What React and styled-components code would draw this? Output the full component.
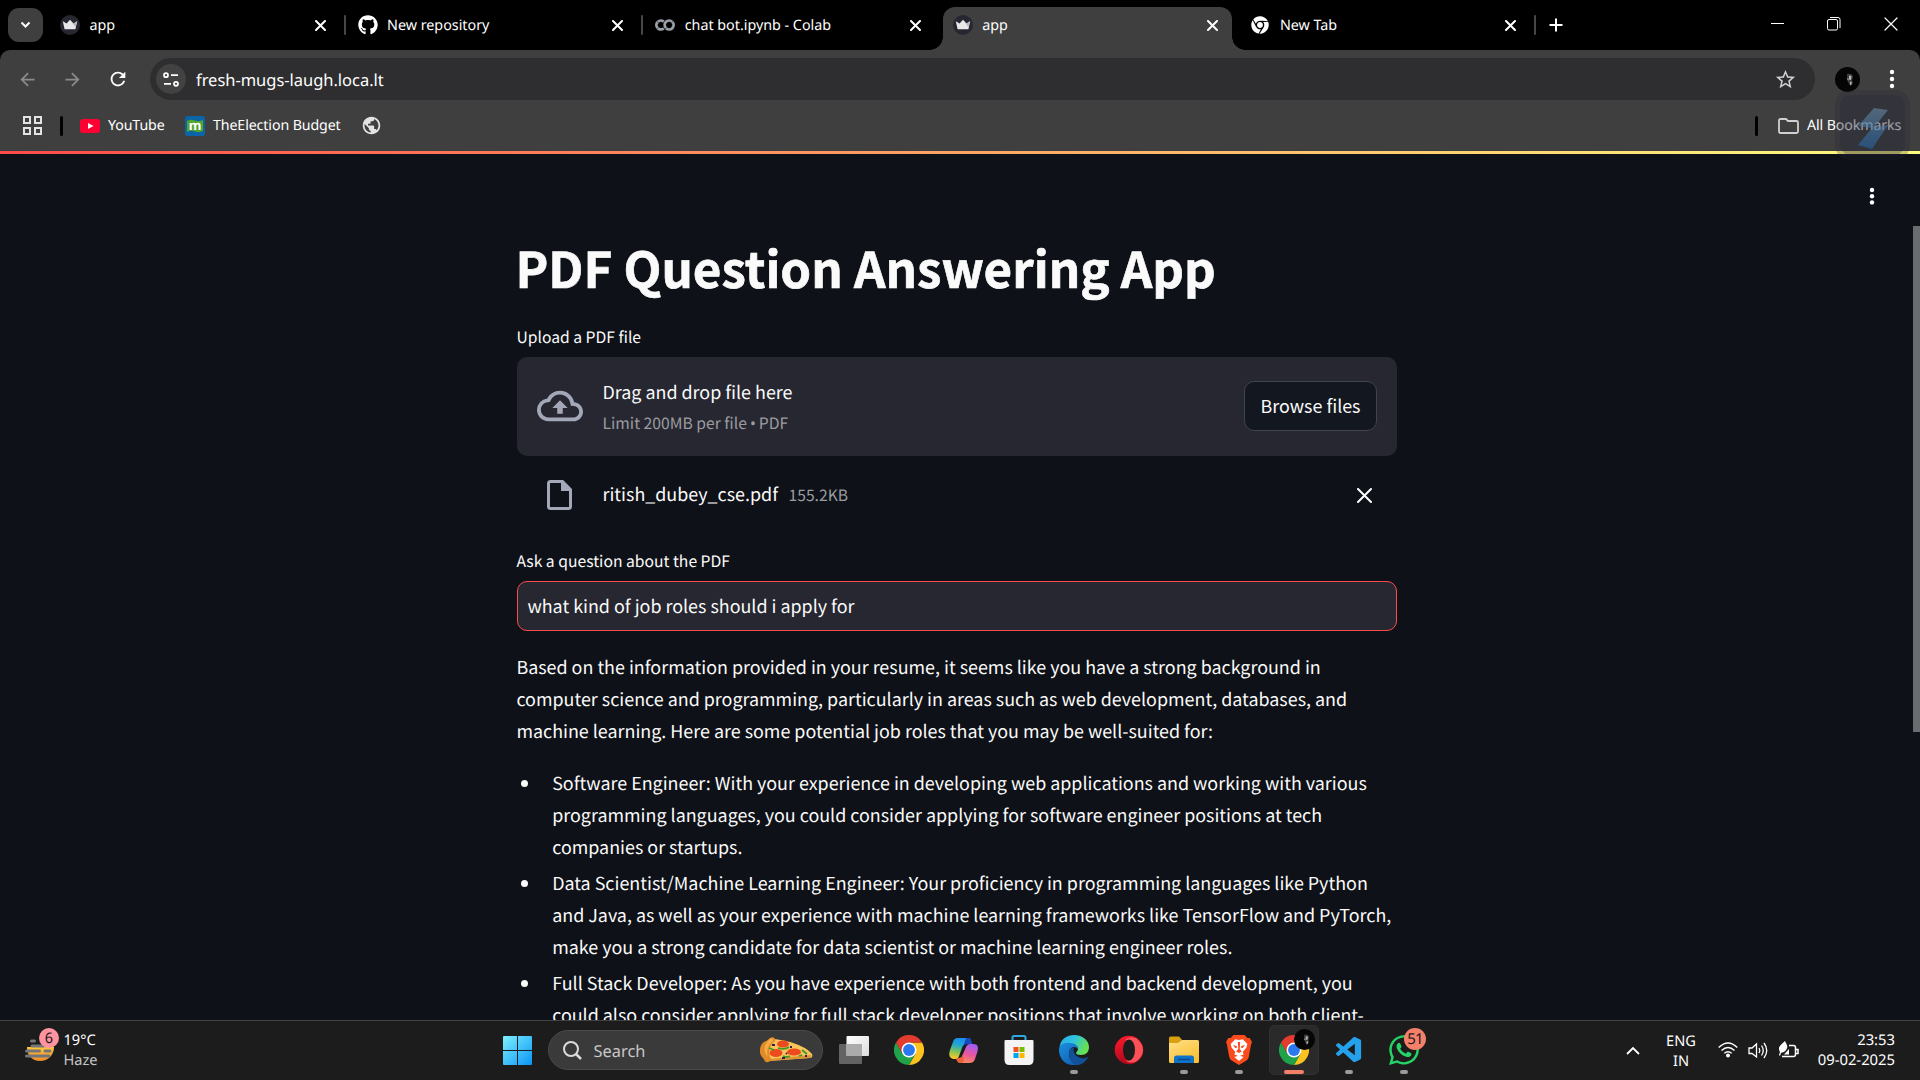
import React from 'react';
import styled, { createGlobalStyle, css } from 'styled-components';
import { FaChrome, FaGithub, FaWhatsapp } from 'react-icons/fa';
import { SiGooglecolab } from 'react-icons/si';
import { MdArrowBack, MdArrowForward, MdRefresh, MdStarBorder, MdPublic } from 'react-icons/md';
import { VscVscode } from 'react-icons/vsc';

const uiFont = '"Noto Sans", "Open Sans", sans-serif';
const appFont = '"Noto Sans CJK SC", "Noto Sans CJK JP", "Open Sans", sans-serif';

const GlobalStyle = createGlobalStyle`
  * { box-sizing: border-box; }
  html, body { margin: 0; padding: 0; background: #0e1117; overflow: hidden; }
  svg { display: block; flex: none; }
`;

const Screen = styled.div`
  width: 1920px;
  height: 1080px;
  display: flex;
  flex-direction: column;
  overflow: hidden;
  position: relative;
  background: #000;
  color: #fff;
  font-family: ${uiFont};
  text-rendering: geometricPrecision;
`;

/* ---------- tab strip ---------- */
const TabStrip = styled.div`
  height: 50px;
  flex: none;
  display: flex;
  align-items: stretch;
  padding-left: 8px;
`;
const TabSearch = styled.div`
  width: 35px;
  height: 34px;
  margin: 8px 4px 0 0;
  border-radius: 11px;
  background: #3f3f3f;
  display: flex;
  align-items: center;
  justify-content: center;
`;
const Tab = styled.div`
  width: 297.6px;
  display: flex;
  align-items: center;
  padding: 0 19px 0 13px;
  position: relative;
  ${(p) => p.$divider && css`
    &::after {
      content: '';
      position: absolute;
      right: -1px;
      top: 15px;
      width: 2px;
      height: 20px;
      background: #474747;
      border-radius: 1px;
    }
  `}
  ${(p) => p.$active && css`
    width: 289px;
    height: 43px;
    margin: 7px 5px 0 3.6px;
    padding: 0 14px 7px 9.4px;
    background: #3f3f3f;
    border-radius: 12px 12px 0 0;
    &::before, &::after {
      content: '';
      position: absolute;
      bottom: 0;
      width: 13px;
      height: 13px;
    }
    &::before { left: -13px; background: radial-gradient(circle at 0 0, transparent 12.5px, #3f3f3f 13px); }
    &::after { right: -13px; background: radial-gradient(circle at 100% 0, transparent 12.5px, #3f3f3f 13px); }
  `}
`;
const Favicon = styled.span`
  width: 20px;
  height: 20px;
  display: flex;
  align-items: center;
  justify-content: center;
`;
const TabTitle = styled.span`
  flex: 1;
  margin-left: 9.500px;
  padding-top: 1.500px;
  font-size: 14.3px;
  line-height: 20px;
  white-space: nowrap;
`;
const NewTab = styled.div`
  width: 22px;
  margin-left: 10px;
  display: flex;
  align-items: center;
  justify-content: center;
`;
const WindowButtons = styled.div`
  margin-left: auto;
  margin-right: 1px;
  display: flex;
  height: 48px;
`;
const WindowButton = styled.div`
  width: 56.5px;
  display: flex;
  align-items: center;
  justify-content: center;
`;

/* ---------- toolbar ---------- */
const Chrome = styled.div`
  height: 101px;
  flex: none;
  background: #3f3f3f;
  border-radius: 10px 10px 0 0;
`;
const Toolbar = styled.div`
  height: 58px;
  display: flex;
  align-items: center;
  padding: 0 12px 0 5px;
`;
const NavButton = styled.div`
  width: 45px;
  display: flex;
  justify-content: center;
  color: ${(p) => (p.$dim ? '#8b8b8b' : '#fff')};
`;
const AddressBar = styled.div`
  width: 1665px;
  height: 42px;
  margin-left: 10px;
  border-radius: 21px;
  background: #2e2e30;
  display: flex;
  align-items: center;
  padding: 0 18px 0 6px;
`;
const SiteInfo = styled.div`
  width: 30px;
  height: 30px;
  border-radius: 50%;
  background: #424242;
  display: flex;
  align-items: center;
  justify-content: center;
`;
const Url = styled.span`
  flex: 1;
  margin-left: 10px;
  padding-top: 1px;
  font-size: 16.5px;
  line-height: 24px;
  letter-spacing: -0.03px;
`;
const Avatar = styled.div`
  width: 25px;
  height: 25px;
  margin-left: 20px;
  border-radius: 50%;
  background: #050505;
`;
const MenuSlot = styled.div`
  width: 24px;
  margin-left: 20px;
  display: flex;
  justify-content: center;
`;
const Bookmarks = styled.div`
  height: 35px;
  display: flex;
  align-items: center;
  padding: 0 16px 0 23px;
`;
const BarDivider = styled.span`
  width: 3px;
  height: 20px;
  border-radius: 2px;
  background: #000;
  margin: 0 ${(p) => p.$after}px 0 ${(p) => p.$before};
`;
const Bookmark = styled.div`
  display: flex;
  align-items: center;
  gap: 8px;
  width: ${(p) => p.$width}px;
`;
const BookmarkText = styled.span`
  padding-top: 1px;
  font-size: 14.2px;
  line-height: 20px;
  letter-spacing: -0.1px;
  white-space: nowrap;
`;

/* ---------- page ---------- */
const GradientLine = styled.div`
  height: 3px;
  flex: none;
  background: linear-gradient(90deg, #ff4b4b, #fffd80);
`;
const Page = styled.div`
  height: 866px;
  flex: none;
  overflow: hidden;
  background: #0e1117;
  display: grid;
  grid-template-columns: 517px 880px 1fr;
  color: #fafafa;
  font-family: ${appFont};
`;
const Main = styled.main`
  grid-column: 2;
  padding-top: 81px;
  min-width: 0;
`;
const Rail = styled.div`
  grid-column: 3;
  display: flex;
  flex-direction: column;
  align-items: flex-end;
`;
const AppMenu = styled.div`
  margin: 33px 45px 21px 0;
`;
const ScrollThumb = styled.div`
  width: 7px;
  height: 506px;
  background: #6b6c6f;
`;
const Title = styled.h1`
  margin: 0 0 23px -1.5px;
  height: 66px;
  font-size: 49.25px;
  line-height: 66px;
  font-weight: 700;
  -webkit-text-stroke: 0.7px #fafafa;
  white-space: nowrap;
`;
const Label = styled.div`
  height: 25px;
  margin: 0 0 8px -0.6px;
  font-size: 15.7px;
  line-height: 25px;
`;
const Dropzone = styled.div`
  height: 99px;
  border-radius: 10px;
  background: #262730;
  display: flex;
  align-items: center;
  padding: 0 20px 1.5px;
`;
const DropText = styled.div`
  flex: 1;
  margin-left: 19.5px;
  padding-top: 1.5px;
`;
const DropTitle = styled.div`
  font-size: 17.9px;
  line-height: 32px;
`;
const Small = styled.div`
  font-size: 15.7px;
  line-height: 30px;
  color: #9b9ca0;
`;
const MidDot = styled.span`
  font-family: "Noto Sans", sans-serif;
  margin: 0 -0.5px;
`;
const BrowseButton = styled.button`
  width: 133px;
  height: 50px;
  padding: 0 0 1px;
  border: 1px solid #41444c;
  border-radius: 10px;
  background: #131720;
  color: #fafafa;
  font-family: inherit;
  font-size: 17.9px;
  line-height: 32px;
`;
const FileRow = styled.div`
  height: 40px;
  margin: 19px 0 33px;
  display: flex;
  align-items: center;
  padding: 0 25px 0 30px;
`;
const FileName = styled.span`
  margin: 0 10.5px 2px 29.5px;
  font-size: 17.9px;
  line-height: 32px;
`;
const FileClose = styled.span`
  margin-left: auto;
`;
const Field = styled.div`
  height: 50px;
  border: 1px solid #ff4b4b;
  border-radius: 10px;
  background: #262730;
  padding: 8px 9.4px;
  font-size: 17.9px;
  line-height: 32px;
`;
const Answer = styled.p`
  margin: 20px 0 20px -0.6px;
  font-size: 17.9px;
  line-height: 32px;
  white-space: nowrap;
`;
const List = styled.ul`
  list-style: none;
  margin: 0;
  padding: 0;
  display: flex;
  flex-direction: column;
  gap: 4px;
`;
const Item = styled.li`
  display: flex;
  font-size: 17.9px;
  line-height: 32px;
  white-space: nowrap;
`;
const Bullet = styled.span`
  width: 7.5px;
  height: 7.5px;
  flex: none;
  border-radius: 50%;
  background: #fafafa;
  margin: 12.5px 24.2px 0 3.5px;
`;

/* ---------- floating shortcut over the window corner ---------- */
const Floating = styled.div`
  position: absolute;
  left: 1835px;
  top: 90px;
  width: 75px;
  height: 70px;
  border-radius: 15px;
  background: rgba(38, 40, 56, 0.25);
  padding: 5px;
  overflow: hidden;
`;
const FloatingInner = styled.div`
  height: 60px;
  border-radius: 11px;
  background: rgba(34, 37, 54, 0.25);
  display: flex;
  align-items: center;
  justify-content: center;
  padding-top: 5px;
`;

/* ---------- taskbar ---------- */
const Taskbar = styled.div`
  height: 60px;
  flex: none;
  display: flex;
  align-items: flex-start;
  background: #1c1c1c;
  border-top: 1px solid #434343;
`;
const Weather = styled.div`
  width: 492px;
  padding: 9px 0 0 24px;
  display: flex;
`;
const WeatherIcon = styled.div`
  width: 36px;
  height: 36px;
  margin: -3px 3.5px 0 0;
`;
const Lines = styled.div`
  font-size: ${(p) => p.$size || 14.6}px;
  line-height: 20px;
  text-align: ${(p) => p.$align || 'left'};
  white-space: nowrap;
`;
const Muted = styled.div`
  color: #c4c4c4;
`;
const Slot = styled.div`
  width: 50px;
  height: 50px;
  margin: 4px 5px 0 0;
  flex: none;
  border-radius: 6px;
  display: flex;
  align-items: center;
  justify-content: center;
  position: relative;
  ${(p) => p.$active && css`
    background: #2a2a2a;
    box-shadow: inset 0 0 0 1px #303030;
  `}
  ${(p) => p.$open && css`
    &::after {
      content: '';
      position: absolute;
      bottom: 1px;
      left: ${p.$active ? 15 : 21}px;
      width: ${p.$active ? 20 : 8}px;
      height: 4px;
      border-radius: 2px;
      background: ${p.$active ? '#f4806a' : '#9a9a9a'};
    }
  `}
`;
const Badge = styled.span`
  position: absolute;
  left: 25px;
  top: 3px;
  width: 22px;
  height: 22px;
  border-radius: 50%;
  background: #f4806a;
  color: #1a1a1a;
  font-size: 15px;
  line-height: 22px;
  letter-spacing: -0.8px;
  text-align: center;
`;
const ProfileDot = styled.span`
  position: absolute;
  left: 25px;
  top: 4px;
  width: 21px;
  height: 21px;
  border-radius: 50%;
  background: #060606;
  display: flex;
  align-items: center;
  justify-content: center;
`;
const SearchBox = styled.div`
  width: 275px;
  height: 40px;
  margin: 9px 6px 0 1px;
  border-radius: 20px;
  background: #3a3a3a;
  border: 1px solid #4a4a4a;
  display: flex;
  align-items: center;
  padding: 0 9px 0 14px;
`;
const SearchText = styled.span`
  flex: 1;
  margin-left: 11.5px;
  padding-top: 1px;
  font-size: 16.4px;
  line-height: 24px;
  color: #c8c8c8;
`;
const Tray = styled.div`
  margin-left: auto;
  padding: 14px 25px 0 0;
  display: flex;
`;
const TrayIcon = styled.div`
  width: 30px;
  height: 30px;
  display: flex;
  align-items: center;
  justify-content: center;
`;
const Language = styled.div`
  width: 36px;
  margin: -4px 14px 0 15px;
`;
const Clock = styled.div`
  width: 92px;
  margin-top: -5px;
`;

/* ---------- drawings ---------- */
const Crown = () => (
  <svg width="20" height="20" viewBox="0 0 20 20">
    <circle cx="10" cy="10" r="10" fill="#262730" />
    <path d="M2.8 6.2 6.6 8.400 10 4.8l3.400 3.600 3.800-2.200-1.800 8H4.600z" fill="#e8e8ea" />
    <path d="M10 4.8 13.400 8.400 17.200 6.200 15.400 12z" fill="#b5b5b9" />
  </svg>
);
const Cross = ({ size = 9, stroke = 2 }) => (
  <svg width={size + 2} height={size + 2} viewBox={`-1 -1 ${size + 2} ${size + 2}`}>
    <path d={`M0 0 ${size} ${size}M${size} 0 0 ${size}`} stroke="#fff" strokeWidth={stroke} fill="none" strokeLinecap="round" />
  </svg>
);
const Dots = ({ gap = 8, r = 2.2 }) => (
  <svg width="6" height={gap * 2 + 6} viewBox={`0 0 6 ${gap * 2 + 6}`}>
    {[0, 1, 2].map((i) => <circle key={i} cx="3" cy={3 + gap * i} r={r} fill="#fff" />)}
  </svg>
);
const Face = ({ size = 25 }) => (
  <svg width={size} height={size} viewBox="0 0 25 25">
    <path d="M12 7c3-1 6 0 6 3l-1 3 1 3-3 3-2-4-1-3z" fill="#3d3d3d" />
    <path d="M14 8.500l2.500.5-.5 4-2-.5zM15 14.500l1.800.5-.5 3-1.300-.3zM12.500 11l1 .5v2l-1-.5z" fill="#b5b5b5" />
  </svg>
);
const ChromeLogo = () => (
  <svg width="30" height="30" viewBox="0 0 48 48">
    <path d="M24 12h20.800A24 24 0 0 1 24 48l10.400-18z" fill="#fcc31e" />
    <path d="M3.200 12A24 24 0 0 0 24 48l10.400-18L24 24 13.600 30z" fill="#1fa24a" />
    <path d="M24 12h20.800A24 24 0 0 0 3.200 12l10.400 18z" fill="#e33b2e" />
    <circle cx="24" cy="24" r="12" fill="#fff" />
    <circle cx="24" cy="24" r="9.500" fill="#2a79ee" />
  </svg>
);
const Windows = () => (
  <svg width="29" height="29" viewBox="0 0 29 29">
    <defs>
      <linearGradient id="win" x1="0" y1="0" x2="1" y2="1">
        <stop offset="0" stopColor="#7df0ff" /><stop offset="1" stopColor="#0a95f5" />
      </linearGradient>
    </defs>
    <path d="M0 1a1 1 0 0 1 1-1h13v14H0zM15 0h13a1 1 0 0 1 1 1v13H15zM0 15h14v14H1a1 1 0 0 1-1-1zM15 15h14v13a1 1 0 0 1-1 1H15z" fill="url(#win)" />
  </svg>
);
const Pizza = () => (
  <svg width="54" height="27" viewBox="0 0 54 27">
    <path d="M8 5 14 2C30 3 48 10 53 17c1 2 0 4-2 4L10 24z" fill="#f7c55a" />
    <path d="M50 21 10 24v-2l42-4c1 1 0 3-2 3z" fill="#dc9334" />
    <path d="M11 1c3-2 6 0 5 3C11 8 9 14 11 20c2 2 1 5-2 5-3 1-4-2-4-3C-1 18 0 8 5 5c2-1 4-2 6-4z" fill="#df8b27" />
    <path d="M11 2c2-1 4 0 3 2C9 8 7 14 9 20c-5-5-5-12 2-18z" fill="#f6ad45" />
    <ellipse cx="24" cy="7" rx="6" ry="3.500" fill="#ee4a20" />
    <ellipse cx="17" cy="16" rx="6.500" ry="4" fill="#ee4a20" />
    <ellipse cx="35" cy="15" rx="7" ry="3.600" fill="#ee4a20" />
    <path d="M19 11q7 2 11-1M24 19q4 2 7 0M10 11l5 2M43 13l5 4M40 19l3-1" stroke="#3f9a26" strokeWidth="1.800" fill="none" />
    <path d="M13 8h3M31 10h2M23 21h3M27 16l1 1M46 19h2" stroke="#3b1c4f" strokeWidth="2" />
  </svg>
);
const TaskView = () => (
  <svg width="30" height="28" viewBox="0 0 30 28">
    <defs><linearGradient id="tv" x2="1" y2="1"><stop stopColor="#fff" /><stop offset="1" stopColor="#ddd" /></linearGradient></defs>
    <rect y="8" width="23" height="20" rx="1" fill="#636363" />
    <rect x="7.500" width="22.500" height="20" rx="1" fill="url(#tv)" />
    <path d="M7.500 8H23v12H7.500z" fill="#ababab" />
  </svg>
);
const Copilot = () => (
  <svg width="30" height="28" viewBox="0 0 30 28">
    <defs>
      <linearGradient id="cpa" x1=".5" x2=".3" y2="1"><stop stopColor="#1b8df0" /><stop offset=".35" stopColor="#22a7d0" /><stop offset=".65" stopColor="#7cc25a" /><stop offset="1" stopColor="#ffc928" /></linearGradient>
      <linearGradient id="cpb" x1=".6" x2=".3" y2="1"><stop stopColor="#a25cf5" /><stop offset=".5" stopColor="#e8569d" /><stop offset="1" stopColor="#ff8d5c" /></linearGradient>
    </defs>
    <path d="M9 2h10c3 0 3 3 4 6h-6c-2 0-3 1-4 4l-3 8c-1 3-2 3-4 3-5 0-7-3-5-9L4 6c1-3 2-4 5-4z" fill="url(#cpa)" />
    <path d="M17 2h2c3 0 3 2 4 6h-5c-2 0-3 1-4 3z" fill="#174ac0" />
    <path d="M24 8c5 0 6 3 4 9l-2 6c-1 3-3 4-6 4h-8c-3 0-4-2-5-5h3c2 0 3-1 4-4l3-7c1-2 2-3 4-3z" fill="url(#cpb)" />
    <path d="M7 22h3c2 0 3-1 4-4l1 8-3 1c-3 0-4-2-5-5z" fill="#e8633a" />
  </svg>
);
const Store = () => (
  <svg width="30" height="30" viewBox="0 0 30 30">
    <path d="M8.500 7V2.500A1.500 1.500 0 0 1 10 1h10a1.500 1.500 0 0 1 1.500 1.500V7" stroke="#2fa8e8" strokeWidth="2" fill="none" />
    <path d="M.5 6q0-1 1-1h27q1 0 1 1v19q0 5-5 5h-19q-5 0-5-5z" fill="#f4f4f4" />
    <path d="M9.500 12h5v5h-5z" fill="#f15022" /><path d="M15.500 12h5v5h-5z" fill="#7fb900" />
    <path d="M9.500 18h5v5h-5z" fill="#00a3ee" /><path d="M15.500 18h5v5h-5z" fill="#ffb800" />
  </svg>
);
const Edge = () => (
  <svg width="30" height="30" viewBox="0 0 30 30">
    <defs>
      <linearGradient id="ega" x2="1" y2=".4"><stop stopColor="#29a9e8" /><stop offset=".5" stopColor="#2fc3df" /><stop offset="1" stopColor="#65e151" /></linearGradient>
      <linearGradient id="egb" x2=".7" y2="1"><stop stopColor="#1b8fe0" /><stop offset="1" stopColor="#1263b4" /></linearGradient>
    </defs>
    <path d="M.5 13C1 5 7 0 15 0c9 0 15 6 15 12 0 5-3 8-8 8-3 0-5-1-5-2s2-2 2-4c0-3-3-5-7-5C7 8 2 10 .5 13z" fill="url(#ega)" />
    <path d="M0 15C0 10 5 7 11 8c5 0 8 3 8 6-1-1-2-2-4-2-3 0-5 3-5 7 0 5 4 10 9 10-10 4-19-4-19-14z" fill="url(#egb)" />
    <path d="M10 18c0-3 2-5 5-6-1 2-1 9 7 11 3 1 5 0 6-1 1 0 1 1 0 2-3 4-6 6-11 6-4-1-7-6-7-12z" fill="#12509a" />
  </svg>
);
const Opera = () => (
  <svg width="30" height="30" viewBox="0 0 30 30">
    <defs><linearGradient id="op" x2=".3" y2="1"><stop stopColor="#ff1b2d" /><stop offset="1" stopColor="#b0071b" /></linearGradient></defs>
    <circle cx="15" cy="15" r="14.300" fill="url(#op)" />
    <path d="M11 5c4-4 9-3 12-1 8 6 8 16 0 22-3 2-8 3-12-1 9 4 13-16 0-20z" fill="#fa5057" />
    <ellipse cx="15" cy="15" rx="6" ry="10.500" fill="#1c1c1c" />
  </svg>
);
const Explorer = () => (
  <svg width="30" height="28" viewBox="0 0 30 28">
    <defs><linearGradient id="ex" x2=".6" y2="1"><stop stopColor="#ffe08a" /><stop offset="1" stopColor="#fcc132" /></linearGradient></defs>
    <path d="M0 2q0-1.500 1.500-1.500H10L14 5l-4 3H0z" fill="#d9a010" />
    <path d="M0 7h9l4-3h15.500Q30 4 30 5.500v20q0 1.500-1.500 1.500h-27Q0 27 0 25.500z" fill="url(#ex)" />
    <path d="M5 27v-5q0-2.500 2.500-2.500h15Q25 19.500 25 22v5z" fill="#1173c8" />
    <path d="M9 23.500h12" stroke="#0a4b8c" strokeWidth="1.500" />
  </svg>
);
const Brave = () => (
  <svg width="26" height="30" viewBox="0 0 28 30" preserveAspectRatio="none">
    <path d="M8 0h12l3 3h2.500L28 7l-1 2.500L24.500 22q-.5 2-2.500 3.500L14 30l-8-4.500Q4 24 3.500 22L1 9.500 0 7l2.500-4H5z" fill="#fb4b1d" />
    <path d="m14 5 4-.8L23 9l-1 3.500-4 4.500 1 2.500-3 1-2 1.500-2-1.500-3-1L10 17l-4-4.500L5 9l5-4.800z" fill="#fff" />
    <path d="m9 22 5-1.500 5 1.500-5 4z" fill="#fff" />
    <path d="m7.500 10 4 1 .5 1.500-2 .5zM20.500 10l-4 1-.5 1.500 2 .5zM12.800 7h2.400l-.4 7 2.200 2.500-3 1.500-3-1.500 2.200-2.500z" fill="#fb4b1d" />
  </svg>
);
const Haze = () => (
  <svg width="36" height="36" viewBox="0 0 36 36">
    <defs><linearGradient id="hz" x2="0" y2="1"><stop stopColor="#ffc83d" /><stop offset="1" stopColor="#f08a24" /></linearGradient></defs>
    <path d="M3 20h27c0 8-6 14-14 14S3 28 3 20z" fill="url(#hz)" />
    <path d="M7.500 14h3M8 19h12M2.500 24h13M21 24h5M2.500 29H25" stroke="#73757a" strokeWidth="3" strokeLinecap="round" />
    <circle cx="25" cy="11" r="10" fill="#ff93a0" />
    <text x="25" y="16.300" fontSize="14.500" textAnchor="middle" fill="#1a1a1a">6</text>
  </svg>
);

const TABS = [
  { title: 'app', icon: <Crown />, divider: true },
  { title: 'New repository', icon: <FaGithub size={20} />, divider: true },
  { title: 'chat bot.ipynb - Colab', icon: <SiGooglecolab size={20} color="#9aa0a8" /> },
  { title: 'app', icon: <Crown />, active: true },
  { title: 'New Tab', icon: <FaChrome size={18} />, divider: true },
];
const ROLES = [
  ['Software Engineer: With your experience in developing web applications and working with various', 'programming languages, you could consider applying for software engineer positions at tech', 'companies or startups.'],
  ['Data Scientist/Machine Learning Engineer: Your proficiency in programming languages like Python', 'and Java, as well as your experience with machine learning frameworks like TensorFlow and PyTorch,', 'make you a strong candidate for data scientist or machine learning engineer roles.'],
  ['Full Stack Developer: As you have experience with both frontend and backend development, you', 'could also consider applying for full stack developer positions that involve working on both client-'],
];
const Broken = ({ lines }) => lines.map((line, i) => (
  <React.Fragment key={line}>{i > 0 && <br />}{line}</React.Fragment>
));

export default function App() {
  return (
    <Screen>
      <GlobalStyle />
      <TabStrip>
        <TabSearch>
          <svg width="11" height="8" viewBox="0 0 11 8"><path d="m1.500 1.500 4 4 4-4" stroke="#fff" strokeWidth="2" fill="none" /></svg>
        </TabSearch>
        {TABS.map((t, i) => (
          <Tab key={i} $active={t.active} $divider={t.divider}>
            <Favicon>{t.icon}</Favicon>
            <TabTitle>{t.title}</TabTitle>
            <Cross />
          </Tab>
        ))}
        <NewTab>
          <svg width="14" height="14" viewBox="0 0 14 14"><path d="M7 .5v13M.5 7h13" stroke="#fff" strokeWidth="2" /></svg>
        </NewTab>
        <WindowButtons>
          <WindowButton><svg width="13" height="2"><path d="M0 .5h13" stroke="#fff" /></svg></WindowButton>
          <WindowButton>
            <svg width="14" height="14" viewBox="0 0 14 14" fill="none" stroke="#fff">
              <rect x=".5" y="2.500" width="10" height="10.500" rx="1.500" /><path d="M3 .5h8a2 2 0 0 1 2 2V11" />
            </svg>
          </WindowButton>
          <WindowButton><Cross size={12} stroke={1.2} /></WindowButton>
        </WindowButtons>
      </TabStrip>

      <Chrome>
        <Toolbar>
          <NavButton $dim><MdArrowBack size={21} /></NavButton>
          <NavButton $dim><MdArrowForward size={21} /></NavButton>
          <NavButton><MdRefresh size={22} /></NavButton>
          <AddressBar>
            <SiteInfo>
              <svg width="16" height="15" viewBox="0 0 16 15" fill="none" stroke="#fff" strokeWidth="1.700">
                <circle cx="3" cy="3.200" r="2" /><path d="M8 3.200h7M1 11.800h7" /><circle cx="13" cy="11.800" r="2" />
              </svg>
            </SiteInfo>
            <Url>fresh-mugs-laugh.loca.lt</Url>
            <MdStarBorder size={23} color="#d0d0d0" />
          </AddressBar>
          <Avatar><Face /></Avatar>
          <MenuSlot><Dots gap={7} /></MenuSlot>
        </Toolbar>
        <Bookmarks>
          <svg width="19" height="19" viewBox="0 0 19 19" fill="none" stroke="#e3e3e3" strokeWidth="2">
            <path d="M1 1h6v6H1zM12 1h6v6h-6zM1 12h6v6H1zM12 12h6v6h-6z" />
          </svg>
          <BarDivider $before="18px" $after={17} />
          <Bookmark $width={105}>
            <svg width="20" height="14" viewBox="0 0 20 14"><rect width="20" height="14" rx="3" fill="#ff0033" /><path d="m8 4 5.500 3L8 10z" fill="#fff" /></svg>
            <BookmarkText>YouTube</BookmarkText>
          </Bookmark>
          <Bookmark $width={175.5}>
            <svg width="20" height="20" viewBox="0 0 20 20">
              <rect width="20" height="20" rx="2.500" fill="#0b63a8" />
              <path d="M2 5q4-2 8-.5t8-.5v11q-4 2-8 .5T2 16z" fill="#4fa62a" />
              <text x="10" y="14" fontSize="13" fontWeight="700" textAnchor="middle" fill="#fff">m</text>
            </svg>
            <BookmarkText>TheElection Budget</BookmarkText>
          </Bookmark>
          <MdPublic size={21} color="#e3e3e3" />
          <BarDivider $before="auto" $after={20} />
          <Bookmark $width={126}>
            <svg width="21" height="16" viewBox="0 0 21 16" fill="none" stroke="#d0d0d0" strokeWidth="1.800">
              <path d="M1 2.500Q1 1 2.500 1H8l2 2h8.500Q20 3 20 4.500v9q0 1.500-1.500 1.500h-16Q1 15 1 13.500z" />
            </svg>
            <BookmarkText>All Bookmarks</BookmarkText>
          </Bookmark>
        </Bookmarks>
      </Chrome>
      <GradientLine />

      <Page>
        <Main>
          <Title>PDF Question Answering App</Title>
          <Label>Upload a PDF file</Label>
          <Dropzone>
            <svg width="46" height="46" viewBox="0 0 24 24" fill="#a3a8b8">
              <path d="M19.350 10.040A7.490 7.490 0 0 0 12 4C9.110 4 6.600 5.640 5.350 8.040A5.994 5.994 0 0 0 0 14c0 3.310 2.690 6 6 6h13c2.760 0 5-2.240 5-5 0-2.640-2.050-4.780-4.650-4.960zM19 18H6c-2.210 0-4-1.790-4-4 0-2.050 1.530-3.760 3.560-3.970l1.070-.11.500-.95A5.469 5.469 0 0 1 12 6c2.620 0 4.880 1.860 5.390 4.430l.3 1.500 1.530.11A2.980 2.980 0 0 1 22 15c0 1.650-1.350 3-3 3zM8 13h2.550v3h2.900v-3H16l-4-4z" />
            </svg>
            <DropText>
              <DropTitle>Drag and drop file here</DropTitle>
              <Small>Limit 200MB per file <MidDot>•</MidDot> PDF</Small>
            </DropText>
            <BrowseButton>Browse files</BrowseButton>
          </Dropzone>
          <FileRow>
            <svg width="26" height="30" viewBox="0 0 26 30">
              <path d="M4 1.500h11.500l8 8v17q0 2-2 2h-18q-2 0-2-2V3.500q0-2 2-2z" fill="none" stroke="#a3a8b8" strokeWidth="3" />
              <path d="M14 1v10h10z" fill="#a3a8b8" />
            </svg>
            <FileName>ritish_dubey_cse.pdf</FileName>
            <Small>155.2KB</Small>
            <FileClose><Cross size={13} /></FileClose>
          </FileRow>
          <Label>Ask a question about the PDF</Label>
          <Field>what kind of job roles should i apply for</Field>
          <Answer>
            <Broken lines={[
              'Based on the information provided in your resume, it seems like you have a strong background in',
              'computer science and programming, particularly in areas such as web development, databases, and',
              'machine learning. Here are some potential job roles that you may be well-suited for:',
            ]} />
          </Answer>
          <List>
            {ROLES.map((lines) => (
              <Item key={lines[0]}><Bullet /><div><Broken lines={lines} /></div></Item>
            ))}
          </List>
        </Main>
        <Rail>
          <AppMenu><Dots gap={6.2} /></AppMenu>
          <ScrollThumb />
        </Rail>
      </Page>

      <Taskbar>
        <Weather>
          <WeatherIcon><Haze /></WeatherIcon>
          <Lines>19°C<Muted>Haze</Muted></Lines>
        </Weather>
        <Slot><Windows /></Slot>
        <SearchBox>
          <svg width="19" height="19" viewBox="0 0 19 19" fill="none" stroke="#dcdcdc" strokeWidth="2"><circle cx="8" cy="8" r="7" /><path d="m13 13 5 5" strokeWidth="2.500" /></svg>
          <SearchText>Search</SearchText>
          <Pizza />
        </SearchBox>
        <Slot><TaskView /></Slot>
        <Slot><ChromeLogo /></Slot>
        <Slot><Copilot /></Slot>
        <Slot><Store /></Slot>
        <Slot $open><Edge /></Slot>
        <Slot><Opera /></Slot>
        <Slot $open><Explorer /></Slot>
        <Slot $open><Brave /></Slot>
        <Slot $open $active><ChromeLogo /><ProfileDot><Face size={21} /></ProfileDot></Slot>
        <Slot $open><VscVscode size={31} color="#25a0ea" /></Slot>
        <Slot $open><FaWhatsapp size={34} color="#25d366" /><Badge>51</Badge></Slot>
        <Tray>
          <TrayIcon><svg width="14" height="9" viewBox="0 0 14 9"><path d="m1 8 6-6 6 6" stroke="#fff" strokeWidth="1.800" fill="none" /></svg></TrayIcon>
          <Language><Lines $align="center">ENG<br />IN</Lines></Language>
          <TrayIcon>
            <svg width="20" height="16" viewBox="0 0 20 16" fill="none" stroke="#fff" strokeWidth="1.400">
              <path d="M.7 5.500q9.300-9 18.600 0M3.500 8.500q6.500-6 13 0M6.300 11.300q3.700-3.300 7.400 0" /><circle cx="10" cy="13.500" r="1.300" fill="#fff" />
            </svg>
          </TrayIcon>
          <TrayIcon>
            <svg width="20" height="17" viewBox="0 0 20 17" fill="none" stroke="#fff" strokeWidth="1.300">
              <path d="M1 6h3l4.500-4v13L4 11.500H1zM11 6q1.500 2.500 0 5M13.500 3.500q3.500 5 0 10M16 1q5.500 7.500 0 15" />
            </svg>
          </TrayIcon>
          <TrayIcon>
            <svg width="21" height="18" viewBox="0 0 21 18">
              <path d="M11 4.500h4.500q2 0 2 2v7q0 2-2 2H4M18 8.500h2v4h-2" fill="none" stroke="#fff" strokeWidth="1.500" />
              <path d="M11 8v5.500H6z" fill="#fff" /><path d="M7 0c1 3 4 5 1 9-2 3-4 2-5 3l-1 3-1-1 1-3C-1 6 3 4 7 0z" fill="#fff" />
            </svg>
          </TrayIcon>
          <Clock><Lines $align="right" $size={14.8}>23:53<br />09-02-2025</Lines></Clock>
        </Tray>
      </Taskbar>

      <Floating>
        <FloatingInner>
          <svg width="32" height="42" viewBox="0 0 32 42" opacity=".55">
            <defs><linearGradient id="fl" x2="0" y2="1"><stop stopColor="#6d93ad" /><stop offset="1" stopColor="#2268ad" /></linearGradient></defs>
            <path d="M17 1 31 3 17 20.500 31 18 15 42 1 38 15 21 1 19z" fill="url(#fl)" />
          </svg>
        </FloatingInner>
      </Floating>
    </Screen>
  );
}
